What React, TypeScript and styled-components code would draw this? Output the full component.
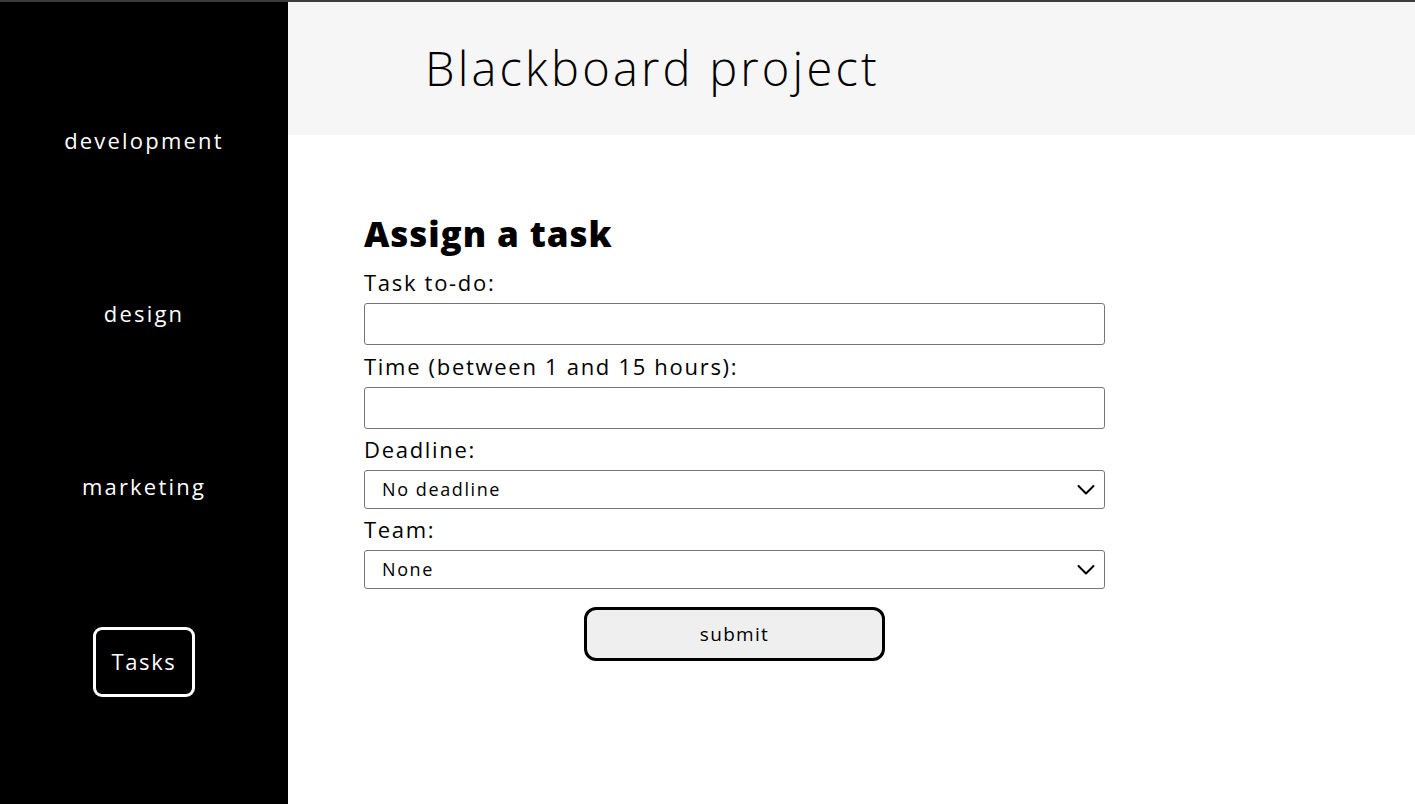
import React from "react";
import styled, { createGlobalStyle } from "styled-components";

const GlobalStyle = createGlobalStyle`
  html, body { margin: 0; padding: 0; background: #ffffff; }
  body { font-family: "Open Sans", "Noto Sans", sans-serif; }
  * { box-sizing: border-box; }
`;

const Page = styled.div`
  display: flex;
  flex-direction: column;
  width: 100%;
  height: 804px;
  overflow: hidden;
`;

const TopLine = styled.div`
  height: 2px;
  background: #3c3c3c;
  flex: none;
`;

const Body = styled.div`
  display: flex;
  flex: 1;
  min-height: 0;
`;

const Sidebar = styled.nav`
  width: 288px;
  flex: none;
  background: #000000;
  display: flex;
  flex-direction: column;
  align-items: center;
  padding-top: 103px;
  gap: 103px;
`;

const NavRow = styled.div`
  height: 70px;
  width: 100%;
  display: flex;
  align-items: center;
  justify-content: center;
`;

const NavItem = styled.a<{ $active?: boolean }>`
  color: #ffffff;
  font-size: 22px;
  font-weight: 400;
  letter-spacing: 2.2px;
  text-decoration: none;
  line-height: 1;
  display: flex;
  align-items: center;
  justify-content: center;
  ${(p) =>
    p.$active
      ? `
    border: 3px solid #ffffff;
    border-radius: 9px;
    width: 102px;
    height: 70px;
    margin-top: 6px;
    padding-bottom: 2px;
    letter-spacing: 1.6px;
  `
      : ""}
`;

const Main = styled.main`
  flex: 1;
  display: flex;
  flex-direction: column;
`;

const Header = styled.header`
  height: 133px;
  background: #f6f6f6;
  display: flex;
  align-items: center;
  padding-left: 137px;
`;

const Title = styled.h1`
  margin: 0 0 2px;
  font-size: 47px;
  font-weight: 300;
  color: #000000;
  letter-spacing: 3.2px;
`;

const Content = styled.section`
  padding: 78px 0 0 76px;
`;

const Form = styled.form`
  width: 741px;
  display: flex;
  flex-direction: column;
`;

const Heading = styled.h2`
  margin: 0 0 12px;
  font-size: 35px;
  line-height: 41px;
  font-weight: 800;
  letter-spacing: 0.9px;
  color: #000000;
`;

const Label = styled.label`
  display: block;
  font-size: 22px;
  line-height: 33px;
  letter-spacing: 1.7px;
  color: #000000;
  margin-bottom: 4px;
`;

const Field = styled.div<{ $gap: number }>`
  display: flex;
  flex-direction: column;
  margin-bottom: ${(p) => p.$gap}px;
`;

const TextInput = styled.input`
  width: 100%;
  height: 42px;
  border: 1px solid #767676;
  border-radius: 3px;
  background: #ffffff;
  font-family: inherit;
  font-size: 18px;
  padding: 0 8px;
  outline: none;
`;

const SelectWrap = styled.div`
  position: relative;
  width: 100%;
`;

const Select = styled.select`
  appearance: none;
  -webkit-appearance: none;
  width: 100%;
  height: 39px;
  border: 1px solid #767676;
  border-radius: 3px;
  background: #ffffff;
  font-family: inherit;
  font-size: 18px;
  letter-spacing: 1.6px;
  color: #000000;
  padding: 0 40px 2px 17px;
  outline: none;
`;

const Chevron = styled.svg`
  position: absolute;
  right: 10px;
  top: 50%;
  transform: translateY(-50%);
  pointer-events: none;
`;

const SubmitRow = styled.div`
  display: flex;
  justify-content: center;
  margin-top: 13px;
`;

const SubmitButton = styled.button`
  width: 301px;
  height: 54px;
  border: 3px solid #000000;
  border-radius: 12px;
  background: #efefef;
  font-family: inherit;
  font-size: 19px;
  letter-spacing: 1.3px;
  color: #000000;
  padding-bottom: 2px;
  cursor: pointer;
`;

const ChevronIcon = () => (
  <Chevron width="18" height="12" viewBox="0 0 18 12">
    <path d="M1.5 2 L9 9.5 L16.5 2" fill="none" stroke="#000" strokeWidth="2" strokeLinecap="round" strokeLinejoin="round" />
  </Chevron>
);

export default function App() {
  return (
    <>
      <GlobalStyle />
      <Page>
        <TopLine />
        <Body>
          <Sidebar>
            <NavRow><NavItem>development</NavItem></NavRow>
            <NavRow><NavItem>design</NavItem></NavRow>
            <NavRow><NavItem>marketing</NavItem></NavRow>
            <NavRow><NavItem $active>Tasks</NavItem></NavRow>
          </Sidebar>
          <Main>
            <Header>
              <Title>Blackboard project</Title>
            </Header>
            <Content>
              <Form onSubmit={(e) => e.preventDefault()}>
                <Heading>Assign a task</Heading>
                <Field $gap={5}>
                  <Label>Task to-do:</Label>
                  <TextInput type="text" />
                </Field>
                <Field $gap={4}>
                  <Label>Time (between 1 and 15 hours):</Label>
                  <TextInput type="text" />
                </Field>
                <Field $gap={4}>
                  <Label>Deadline:</Label>
                  <SelectWrap>
                    <Select defaultValue="none">
                      <option value="none">No deadline</option>
                    </Select>
                    <ChevronIcon />
                  </SelectWrap>
                </Field>
                <Field $gap={5}>
                  <Label>Team:</Label>
                  <SelectWrap>
                    <Select defaultValue="none">
                      <option value="none">None</option>
                    </Select>
                    <ChevronIcon />
                  </SelectWrap>
                </Field>
                <SubmitRow>
                  <SubmitButton type="submit">submit</SubmitButton>
                </SubmitRow>
              </Form>
            </Content>
          </Main>
        </Body>
      </Page>
    </>
  );
}
